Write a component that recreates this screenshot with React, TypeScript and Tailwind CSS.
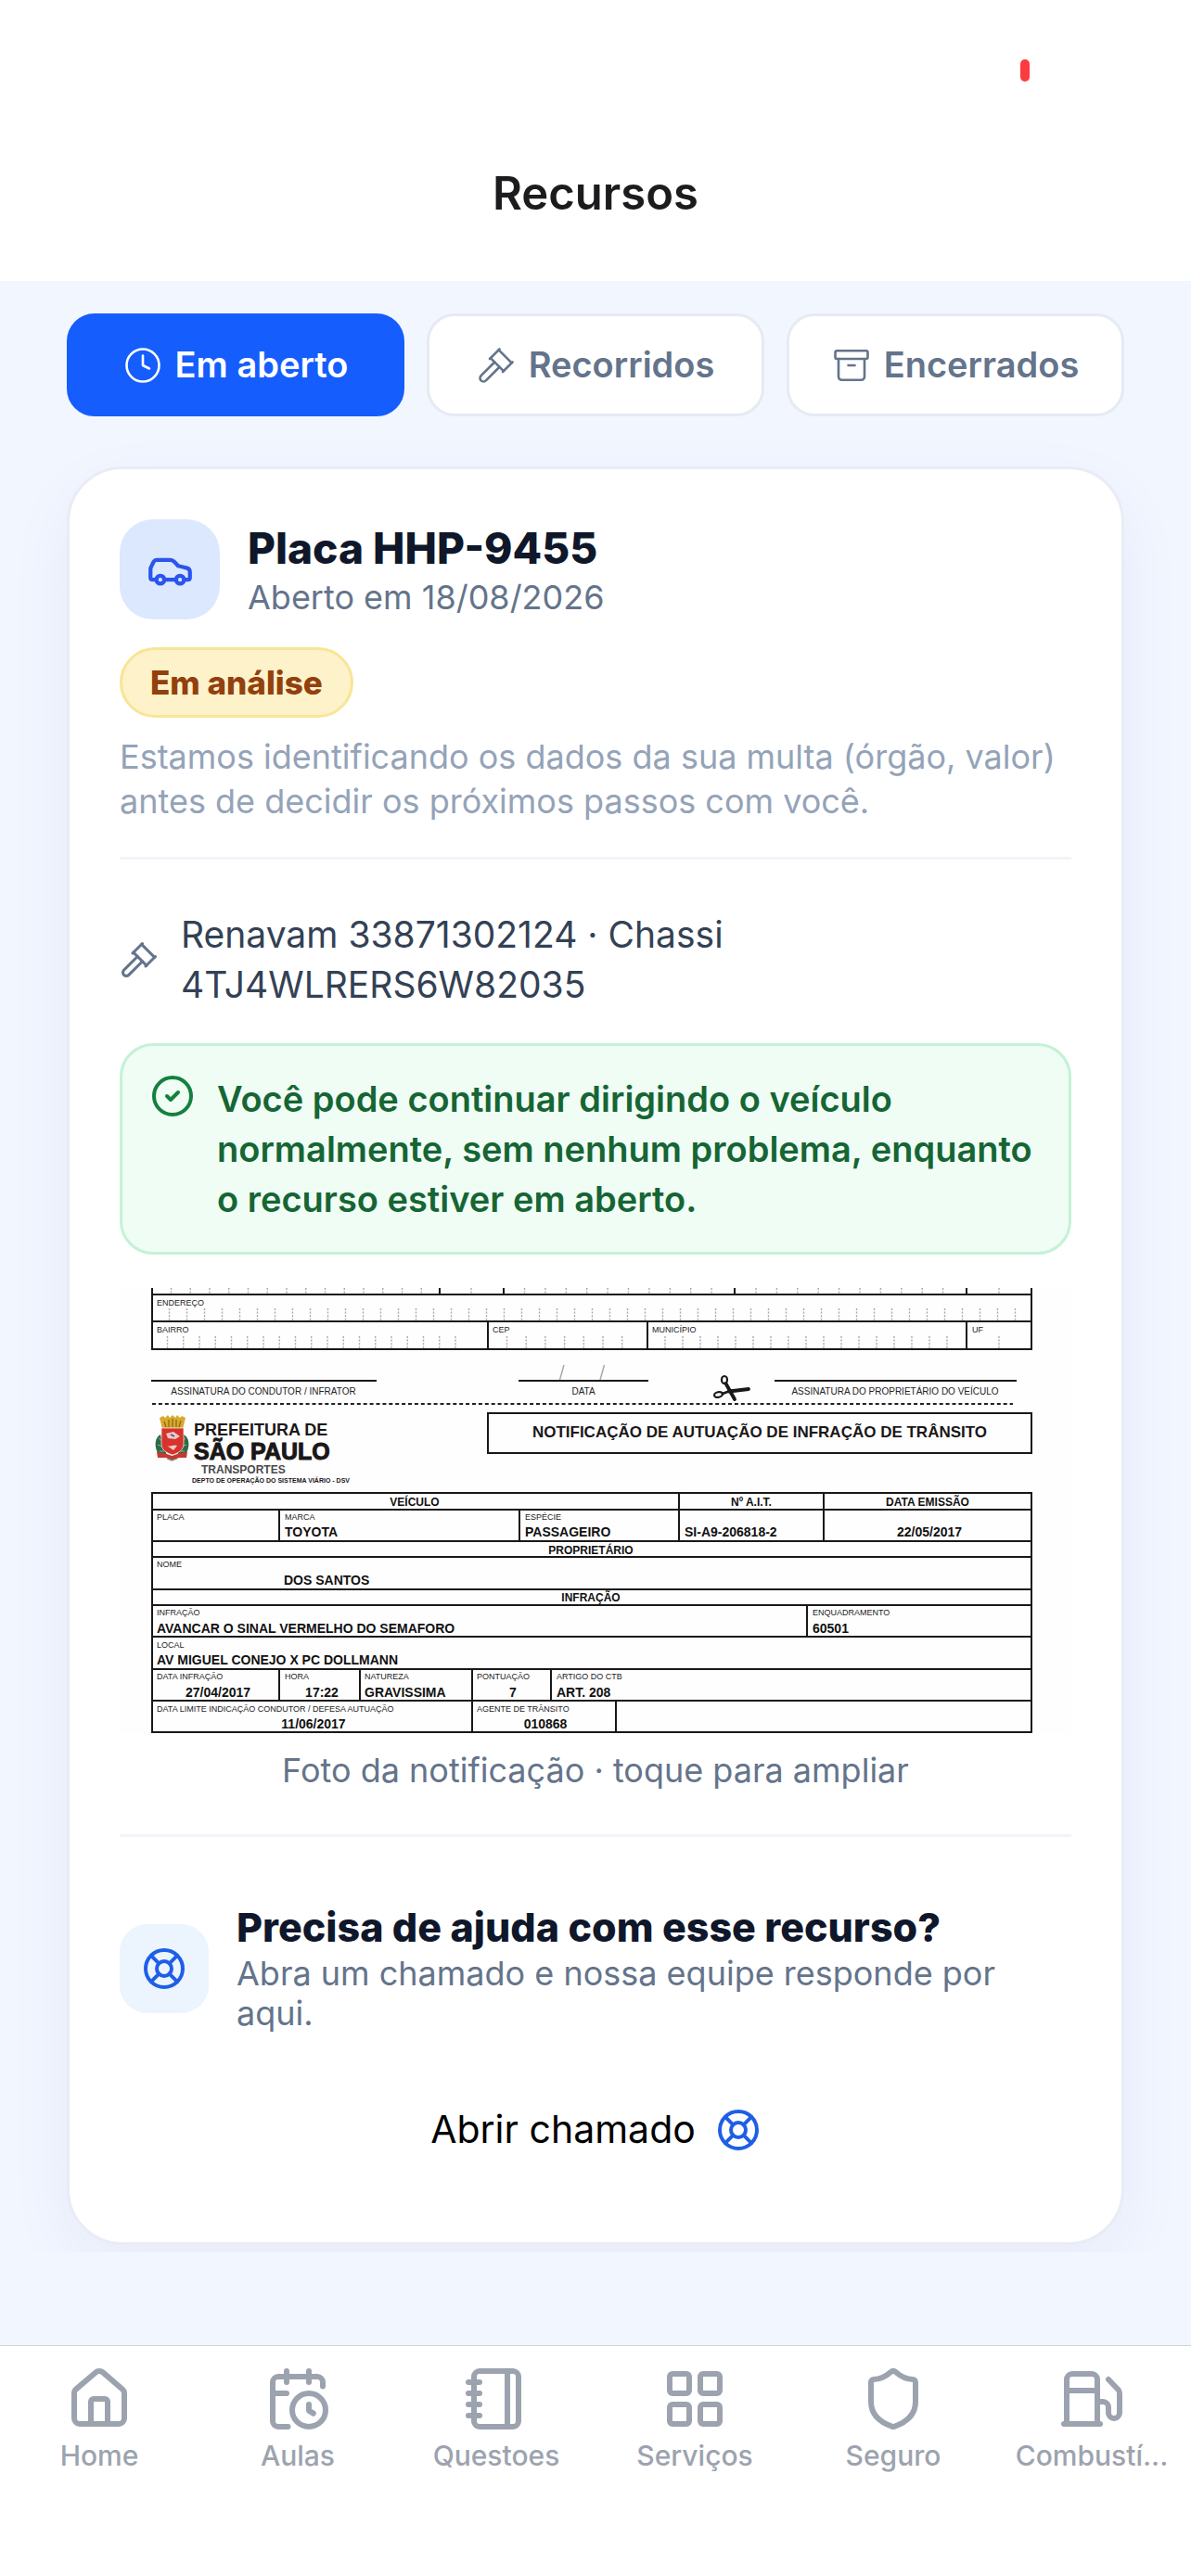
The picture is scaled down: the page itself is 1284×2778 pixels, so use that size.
import { useState } from "react";
import clsx from "clsx";
import {
  Archive,
  CalendarClock,
  Car,
  CircleCheck,
  Clock,
  Fuel,
  Gavel,
  House,
  LayoutGrid,
  LifeBuoy,
  Notebook,
  Shield,
} from "lucide-react";

const TABS = [
  { id: "open", label: "Em aberto", icon: Clock },
  { id: "appealed", label: "Recorridos", icon: Gavel },
  { id: "closed", label: "Encerrados", icon: Archive },
];

const NAV = [
  { label: "Home", icon: House },
  { label: "Aulas", icon: CalendarClock },
  { label: "Questoes", icon: Notebook },
  { label: "Serviços", icon: LayoutGrid },
  { label: "Seguro", icon: Shield },
  { label: "Combustí...", icon: Fuel },
];

// [x1, y1, x2, y2]
const LINES = [
  [35, 7, 983, 7],
  [35, 36, 983, 36],
  [35, 66, 983, 66],
  [35, 0, 35, 66],
  [983, 0, 983, 66],
  [345, 0, 345, 7],
  [414, 0, 414, 7],
  [663, 0, 663, 7],
  [913, 0, 913, 7],
  [397, 36, 397, 66],
  [569, 36, 569, 66],
  [913, 36, 913, 66],
  [35, 100, 276, 100],
  [431, 100, 569, 100],
  [707, 100, 966, 100],
  [35, 221, 983, 221],
  [35, 239, 983, 239],
  [35, 273, 983, 273],
  [35, 290, 983, 290],
  [35, 325, 983, 325],
  [35, 342, 983, 342],
  [35, 376, 983, 376],
  [35, 411, 983, 411],
  [35, 445, 983, 445],
  [35, 479, 983, 479],
  [35, 221, 35, 479],
  [983, 221, 983, 479],
  [603, 221, 603, 273],
  [759, 221, 759, 273],
  [172, 239, 172, 273],
  [431, 239, 431, 273],
  [741, 342, 741, 376],
  [172, 411, 172, 445],
  [259, 411, 259, 445],
  [380, 411, 380, 479],
  [465, 411, 465, 445],
  [535, 445, 535, 479],
];

// letter guides: start, step, count, top, bottom
const GUIDES = [
  [55.5, 20.75, 14, 0, 6],
  [379, 20, 1, 0, 6],
  [436.5, 22.4, 10, 0, 6],
  [686, 22.4, 10, 0, 6],
  [948, 20, 1, 0, 6],
  [53.5, 19, 49, 22, 35],
  [51.5, 17.25, 19, 52, 65],
  [417.5, 20.7, 7, 52, 65],
  [588, 19, 17, 52, 65],
  [948, 20, 1, 52, 65],
];

const LABELS: [number, number, string][] = [
  [40, 19, "ENDEREÇO"],
  [40, 48, "BAIRRO"],
  [402, 48, "CEP"],
  [574, 48, "MUNICÍPIO"],
  [919, 48, "UF"],
  [40, 250, "PLACA"],
  [178, 250, "MARCA"],
  [437, 250, "ESPÉCIE"],
  [40, 301, "NOME"],
  [40, 353, "INFRAÇÃO"],
  [747, 353, "ENQUADRAMENTO"],
  [40, 388, "LOCAL"],
  [40, 422, "DATA INFRAÇÃO"],
  [178, 422, "HORA"],
  [264, 422, "NATUREZA"],
  [385, 422, "PONTUAÇÃO"],
  [471, 422, "ARTIGO DO CTB"],
  [40, 457, "DATA LIMITE INDICAÇÃO CONDUTOR / DEFESA AUTUAÇÃO"],
  [385, 457, "AGENTE DE TRÂNSITO"],
];

const VALUES: [number, number, string][] = [
  [178, 268, "TOYOTA"],
  [437, 268, "PASSAGEIRO"],
  [609, 268, "SI-A9-206818-2"],
  [177, 320, "DOS SANTOS"],
  [40, 372, "AVANCAR O SINAL VERMELHO DO SEMAFORO"],
  [747, 372, "60501"],
  [40, 406, "AV MIGUEL CONEJO X PC DOLLMANN"],
  [264, 441, "GRAVISSIMA"],
  [471, 441, "ART. 208"],
];

const CENTERED: [number, number, string][] = [
  [873, 268, "22/05/2017"],
  [106, 441, "27/04/2017"],
  [218, 441, "17:22"],
  [424, 441, "7"],
  [209, 475, "11/06/2017"],
  [459, 475, "010868"],
];

const HEADINGS: [number, number, string][] = [
  [318, 235, "VEÍCULO"],
  [681, 235, "Nº A.I.T."],
  [871, 235, "DATA EMISSÃO"],
  [508, 287, "PROPRIETÁRIO"],
  [508, 338, "INFRAÇÃO"],
];

function NoticePhoto() {
  return (
    <svg
      viewBox="0 0 1026 480"
      className="block w-full font-['Liberation_Sans',sans-serif]"
      role="img"
      aria-label="Foto da notificação"
    >
      <rect width="1026" height="480" fill="#fefefe" />
      <g stroke="#a8a8a8" strokeWidth="1.4" strokeDasharray="2 1.6">
        {GUIDES.map(([start, step, count, top, bottom]) =>
          Array.from({ length: count }, (_, i) => (
            <line
              key={`${start}-${top}-${i}`}
              x1={start + i * step}
              x2={start + i * step}
              y1={top}
              y2={bottom}
            />
          ))
        )}
      </g>
      <g stroke="#1a1718" strokeWidth="2" strokeLinecap="square">
        {LINES.map(([x1, y1, x2, y2]) => (
          <line key={`${x1}-${y1}-${x2}-${y2}`} x1={x1} y1={y1} x2={x2} y2={y2} />
        ))}
      </g>
      <rect x="397" y="135" width="586" height="43" fill="none" stroke="#1a1718" strokeWidth="2" />
      <path d="M35 125H963" stroke="#222" strokeWidth="2" strokeDasharray="4 2.9" />
      <path d="M479 83l-4.500 16M522.500 83l-4.500 16" stroke="#aaa" strokeWidth="1.5" />

      {/* scissors on the cut line */}
      <g fill="none" stroke="#1a1718" strokeLinecap="round">
        <ellipse cx="652" cy="99" rx="3" ry="4" strokeWidth="2.200" />
        <ellipse cx="645.500" cy="115" rx="4.500" ry="2.800" strokeWidth="2.200" transform="rotate(-12 645.500 115)" />
        <path d="M653.500 103l9.500 17" strokeWidth="3.800" />
        <path d="M650 114l9-3.500" strokeWidth="2.800" />
        <path d="M657 111.500l21-2.500" strokeWidth="3.800" />
      </g>

      {/* coat of arms */}
      <g>
        <path d="M44 158c-6 3-7 12-3 20 3 4 8 4 10 3zM69 158c6 3 7 12 3 20-3 4-8 4-10 3z" fill="#2c6b45" />
        <path d="M42 162l4 3M41 169l5 2M43 176l5 0M71 162l-4 3M72 169l-5 2M70 176l-5 0" stroke="#8fb59b" strokeWidth="1" />
        <path d="M43 140l4-2 2 2 3-3 2 3 3-3 3 3 2-3 3 3 2-2 4 2-3 12H46z" fill="#d9a92c" />
        <path d="M48 144l2 6M53 142v8M57 141v9M61 142v8M66 143l-2 7" stroke="#8a6414" strokeWidth="1.2" />
        <path d="M45 151h24v17c0 7-6 10-12 12C51 178 45 175 45 168z" fill="#d8322c" stroke="#efe3e0" strokeWidth=".8" />
        <path d="M50 157l8-2 7 5-5 3-8-1zM51 170c4 2 7-2 11 0l-4 5z" fill="#f0c9c6" />
        <path d="M55 158l4 2" stroke="#44567c" strokeWidth="1.400" />
        <path d="M40 177l8 1 8.500 3 8.500-3 8-1-1 6-8 0-7 3-7-3-9 0z" fill="#c63832" />
        <path d="M51 184l5 2 6-2" stroke="#6d9a80" strokeWidth="1.200" fill="none" />
      </g>

      <g fill="#1a1718" fontWeight="700">
        <text x="80" y="159" fontSize="18">PREFEITURA DE</text>
        <text x="80" y="185" fontSize="25" stroke="#1a1718" strokeWidth="1">SÃO PAULO</text>
        <text x="88" y="200" fontSize="12" fill="#4a4a4a">TRANSPORTES</text>
        <text x="78" y="210" fontSize="7">DEPTO DE OPERAÇÃO DO SISTEMA VIÁRIO - DSV</text>
        <text x="690" y="161" fontSize="17" textAnchor="middle">
          NOTIFICAÇÃO DE AUTUAÇÃO DE INFRAÇÃO DE TRÂNSITO
        </text>
      </g>
      <g fill="#222" fontSize="10" textAnchor="middle">
        <text x="155" y="115">ASSINATURA DO CONDUTOR / INFRATOR</text>
        <text x="500" y="115">DATA</text>
        <text x="836" y="115">ASSINATURA DO PROPRIETÁRIO DO VEÍCULO</text>
      </g>
      <g fill="#222" fontSize="9">
        {LABELS.map(([x, y, text]) => (
          <text key={`${x}-${y}`} x={x} y={y}>{text}</text>
        ))}
      </g>
      <g fill="#111" fontSize="14" fontWeight="700">
        {VALUES.map(([x, y, text]) => (
          <text key={`${x}-${y}`} x={x} y={y}>{text}</text>
        ))}
        {CENTERED.map(([x, y, text]) => (
          <text key={`${x}-${y}`} x={x} y={y} textAnchor="middle">{text}</text>
        ))}
      </g>
      <g fill="#111" fontSize="12" fontWeight="700" textAnchor="middle">
        {HEADINGS.map(([x, y, text]) => (
          <text key={`${x}-${y}`} x={x} y={y}>{text}</text>
        ))}
      </g>
    </svg>
  );
}

export default function App() {
  const [tab, setTab] = useState("open");

  return (
    <div className="flex min-h-screen flex-col bg-[#f2f6ff] font-['Inter',sans-serif]">
      <header className="bg-white">
        <div className="flex justify-end pt-16 pr-[174px]">
          <span className="h-6 w-[10px] rounded-full bg-[#fb3b40]" />
        </div>
        <h1 className="pt-[91px] pb-16 text-center text-[49px] leading-[60px] font-semibold text-[#1c1c1e]">
          Recursos
        </h1>
      </header>

      <main className="overflow-hidden px-[72px] pt-[35px] pb-2">
        <div className="grid grid-cols-3 gap-6">
          {TABS.map(({ id, label, icon: Icon }) => (
            <button
              key={id}
              type="button"
              onClick={() => setTab(id)}
              className={clsx(
                "flex items-center justify-center gap-[14px] rounded-[30px] border-[3px] py-[30px] text-[38px] leading-[45px] font-semibold",
                tab === id
                  ? "border-[#155dfc] bg-[#155dfc] text-white"
                  : "border-[#e6eaf3] bg-white text-[#64748b]"
              )}
            >
              <Icon size={42} strokeWidth={1.5} />
              {label}
            </button>
          ))}
        </div>

        <article className="mt-[54px] rounded-[60px] border-[3px] border-[#e9ecf5] bg-white p-[54px] shadow-[0_24px_72px_rgba(30,41,140,0.05)]">
          <div className="flex items-center gap-[30px]">
            <div className="flex size-[108px] shrink-0 items-center justify-center rounded-[36px] bg-[#dbe8fe]">
              <Car size={51} strokeWidth={2} className="text-[#2b55ec]" />
            </div>
            <div className="pt-1">
              <h2 className="text-[46px] leading-[54px] font-extrabold text-[#0f172a]">Placa HHP-9455</h2>
              <p className="mt-[2px] text-[36px] leading-[48px] text-[#64748b]">Aberto em 18/08/2026</p>
            </div>
          </div>
          <span className="mt-[30px] inline-block rounded-full border-[3px] border-[#f8e596] bg-[#fdf2c9] px-[30px] py-[15px] text-[35px] leading-[40px] font-extrabold text-[#92400e]">
            Em análise
          </span>
          <p className="mt-[18px] text-[36px] leading-[48px] text-[#94a3b8]">
            Estamos identificando os dados da sua multa (órgão, valor) antes de decidir os próximos passos com você.
          </p>

          <div className="mt-9 border-t-[3px] border-[#f1f5f9] pt-[54px]">
            <div className="flex items-center gap-6">
              <Gavel size={42} strokeWidth={1.75} className="shrink-0 text-[#64748b]" />
              <p className="max-w-[800px] text-[39px] leading-[54px] text-[#334155]">
                Renavam 33871302124 · Chassi 4TJ4WLRERS6W82035
              </p>
            </div>
            <div className="mt-9 flex gap-6 rounded-[36px] border-[3px] border-[#c3f2d6] bg-[#effdf5] p-[30px]">
              <CircleCheck size={48} strokeWidth={2} className="shrink-0 text-[#15803d]" />
              <p className="text-[38px] leading-[54px] font-semibold text-[#166534]">
                Você pode continuar dirigindo o veículo normalmente, sem nenhum problema, enquanto o recurso estiver em
                aberto.
              </p>
            </div>
            <button type="button" className="mt-9 block w-full">
              <NoticePhoto />
              <span className="mt-[18px] block text-[36px] leading-[44px] text-[#64748b]">
                Foto da notificação · toque para ampliar
              </span>
            </button>
          </div>

          <div className="mt-[47px] border-t-[3px] border-[#f1f5f9] pt-[72px]">
            <div className="flex items-center gap-[30px]">
              <div className="flex size-24 shrink-0 items-center justify-center rounded-[30px] bg-[#ecf4fe]">
                <LifeBuoy size={48} strokeWidth={2} className="text-[#1f5fe6]" />
              </div>
              <div>
                <h3 className="text-[43px] leading-[50px] font-extrabold text-[#0f172a]">
                  Precisa de ajuda com esse recurso?
                </h3>
                <p className="mt-1 text-[36px] leading-[43px] text-[#64748b]">
                  Abra um chamado e nossa equipe responde por aqui.
                </p>
              </div>
            </div>
            <button
              type="button"
              className="mt-9 flex w-full items-center justify-center gap-[22px] py-[42px] text-[41px] leading-[51px] text-black"
            >
              Abrir chamado
              <LifeBuoy size={48} strokeWidth={2} className="text-[#1f5fe6]" />
            </button>
          </div>
        </article>
      </main>

      <nav className="mt-auto grid grid-cols-6 border-t border-[#d0d3d8] bg-white pt-[21px] pb-[109px] text-[#9ca3af]">
        {NAV.map(({ label, icon: Icon }) => (
          <a key={label} href="#" className="flex min-w-0 flex-col items-center gap-1">
            <Icon size={72} strokeWidth={2} />
            <span className="text-[30px] leading-[42px] font-medium whitespace-nowrap">{label}</span>
          </a>
        ))}
      </nav>
    </div>
  );
}
